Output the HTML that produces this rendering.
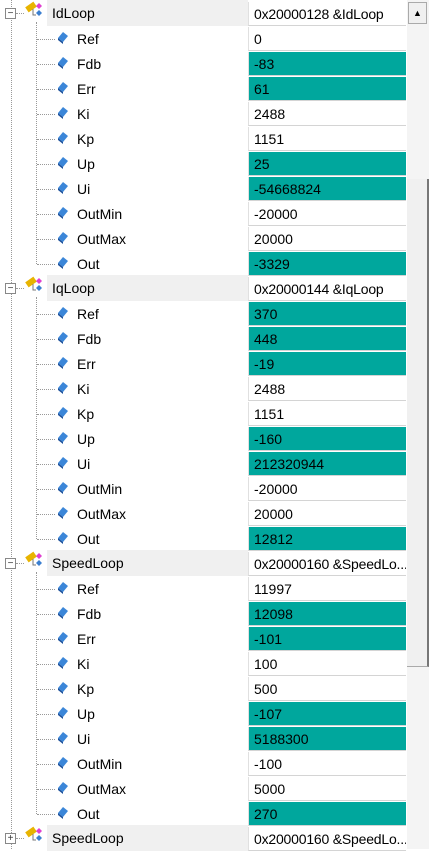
<!DOCTYPE html><html><head><style>
body{margin:0;width:429px;height:849px;overflow:hidden;background:#fff;font-family:"Liberation Sans",sans-serif;font-size:14px;color:#000;position:relative}
.r{position:absolute;left:0;width:407px;height:25px}
.n{position:absolute;top:4px}
.v{position:absolute;left:248px;top:0;width:158px;height:24px;border-bottom:1px solid #d4d4d4;border-left:1px solid #e0e0e0;padding-left:5px;box-sizing:border-box;line-height:24px;white-space:nowrap;overflow:hidden}
.t{background:#00a79d}
.p .bg{position:absolute;left:47px;top:0;width:201px;height:25px;background:#f0f0f0}
.vl{position:absolute;border-left:1px dotted #999;width:0}
.hl{position:absolute;border-top:1px dotted #999;height:0}
.box{position:absolute;left:5px;top:7px;width:9px;height:9px;border:1px solid #888;background:#fff;font-size:10px;line-height:9px;text-align:center;color:#333}
</style></head><body>
<div class="vl" style="left:11px;top:0;height:849px"></div>
<div id="c"></div>
<div style="position:absolute;left:407px;top:0;width:22px;height:849px;background:#f4f4f4"></div>
<div style="position:absolute;left:408px;top:2px;width:19px;height:22px;background:#f0f0f0;border:1px solid #aaa;box-sizing:border-box;text-align:center;font-size:9px;line-height:20px">▲</div>
<div style="position:absolute;left:407px;top:179px;width:20px;height:487px;background:#f0f0f0;border-right:2px solid #777;border-bottom:1px solid #aaa"></div>
<script>
const groups=[["IdLoop","0x20000128 &IdLoop",[["Ref","0"],["Fdb","-83",1],["Err","61",1],["Ki","2488"],["Kp","1151"],["Up","25",1],["Ui","-54668824",1],["OutMin","-20000"],["OutMax","20000"],["Out","-3329",1]]],
["IqLoop","0x20000144 &IqLoop",[["Ref","370",1],["Fdb","448",1],["Err","-19",1],["Ki","2488"],["Kp","1151"],["Up","-160",1],["Ui","212320944",1],["OutMin","-20000"],["OutMax","20000"],["Out","12812",1]]],
["SpeedLoop","0x20000160 &SpeedLo...",[["Ref","11997"],["Fdb","12098",1],["Err","-101",1],["Ki","100"],["Kp","500"],["Up","-107",1],["Ui","5188300",1],["OutMin","-100"],["OutMax","5000"],["Out","270",1]]]];
let h="",i=0;const O=2;
const icon=`<svg style="position:absolute;left:22px;top:1px" width="24" height="22"><rect x="4" y="3" width="10" height="6" fill="#e8b400" transform="rotate(-35 9 6)"/><path d="M14 5l3-3 3 3-3 3z" fill="#e040d0"/><path d="M14 12l3-3 3 3-3 3z" fill="#3a7fd0"/><path d="M11 8v6h3" stroke="#777" fill="none"/></svg>`;
const dia=`<svg style="position:absolute;left:57px;top:4px" width="12" height="14"><path d="M6 1l5 4-5 6-5-4z" fill="#3b86d8"/><path d="M1 7l5 4v2l-5-4z" fill="#1b4f9a"/></svg>`;
function parent(name,val,open){h+=`<div class="r p" style="top:${i*25+O-2}px;height:27px"><div class="bg" style="height:26px"></div><div class="box" style="top:8px">${open?"−":"+"}</div><div class="hl" style="left:16px;top:13px;width:8px"></div>${icon}<div class="n" style="left:52px;top:5px">${name}</div><div class="v" style="top:2px;letter-spacing:-0.2px">${val}</div></div>`;i++;}
groups.forEach(g=>{let s=i;parent(g[0],g[1],1);g[2].forEach(c=>{h+=`<div class="r" style="top:${i*25+O}px"><div class="hl" style="left:37px;top:12px;width:18px"></div>${dia}<div class="n" style="left:77px">${c[0]}</div><div class="v${c[2]?" t":""}">${c[1]}</div></div>`;i++;});h+=`<div class="vl" style="left:36px;top:${s*25+22}px;height:${(i-s-1)*25-8}px"></div>`;});
parent("SpeedLoop","0x20000160 &SpeedLo...",0);
document.getElementById("c").innerHTML=h;
</script></body></html>
